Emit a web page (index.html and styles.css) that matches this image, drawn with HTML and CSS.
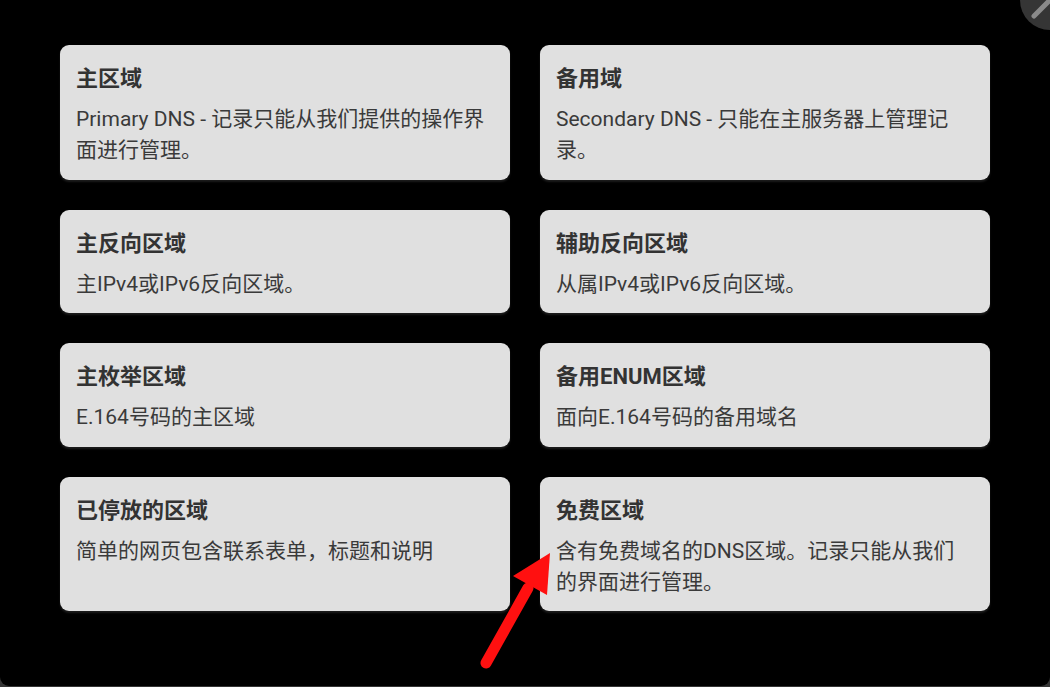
FILE: index.html
```html
<!DOCTYPE html>
<html lang="zh">
<head>
<meta charset="utf-8">
<link rel="stylesheet" href="styles.css">
</head>
<body>
<div class="modal">
  <button class="close" aria-label="关闭">
    <svg width="60" height="60" viewBox="0 0 60 60"><path d="M14 46 L46 14 M14 14 L46 46" stroke="#8a8a8a" stroke-width="5" stroke-linecap="round"/></svg>
  </button>
  <div class="grid">
    <div class="card">
      <div class="title">主区域</div>
      <div class="desc">Primary DNS - 记录只能从我们提供的操作界面进行管理。</div>
    </div>
    <div class="card">
      <div class="title">备用域</div>
      <div class="desc">Secondary DNS - 只能在主服务器上管理记录。</div>
    </div>
    <div class="card">
      <div class="title">主反向区域</div>
      <div class="desc">主IPv4或IPv6反向区域。</div>
    </div>
    <div class="card">
      <div class="title">辅助反向区域</div>
      <div class="desc">从属IPv4或IPv6反向区域。</div>
    </div>
    <div class="card">
      <div class="title">主枚举区域</div>
      <div class="desc">E.164号码的主区域</div>
    </div>
    <div class="card">
      <div class="title">备用ENUM区域</div>
      <div class="desc">面向E.164号码的备用域名</div>
    </div>
    <div class="card">
      <div class="title">已停放的区域</div>
      <div class="desc">简单的网页包含联系表单，标题和说明</div>
    </div>
    <div class="card">
      <div class="title">免费区域</div>
      <div class="desc">含有免费域名的DNS区域。记录只能从我们的界面进行管理。</div>
    </div>
  </div>
  <svg class="arrow" width="1050" height="687" viewBox="0 0 1050 687">
    <line x1="486" y1="663" x2="528" y2="588" stroke="#ff1010" stroke-width="11" stroke-linecap="round"/>
    <polygon points="550,553 513,576 547,595" fill="#ff1010"/>
  </svg>
</div>
</body>
</html>
```
FILE: styles.css
```css
html, body {
  margin: 0;
  padding: 0;
}
body {
  background: #353535;
  width: 1050px;
  height: 687px;
  overflow: hidden;
  font-family: "Roboto", "Noto Sans CJK SC", sans-serif;
}
.modal {
  position: relative;
  background: #000;
  height: 686px;
  border-radius: 0 0 9px 9px;
  box-sizing: border-box;
  padding: 45px 60px 0 60px;
}
.close {
  position: absolute;
  left: 1020px;
  top: -30px;
  width: 60px;
  height: 60px;
  border: none;
  padding: 0;
  border-radius: 50%;
  background: #353535;
}
.close svg {
  display: block;
}
.grid {
  display: grid;
  grid-template-columns: 450px 450px;
  column-gap: 30px;
  row-gap: 30px;
}
.card {
  background: #e0e0e0;
  border-radius: 9px;
  box-shadow: 0 2px 2px #1c1c1c;
  padding: 20px 16px 13.5px 16px;
  color: #333;
}
.title {
  font-size: 22px;
  font-weight: 700;
  line-height: 28px;
  margin-bottom: 11px;
  color: #333;
}
.desc {
  font-size: 21px;
  line-height: 31px;
  color: #3a3a3a;
}
.arrow {
  position: absolute;
  left: 0;
  top: 0;
  pointer-events: none;
}
```
